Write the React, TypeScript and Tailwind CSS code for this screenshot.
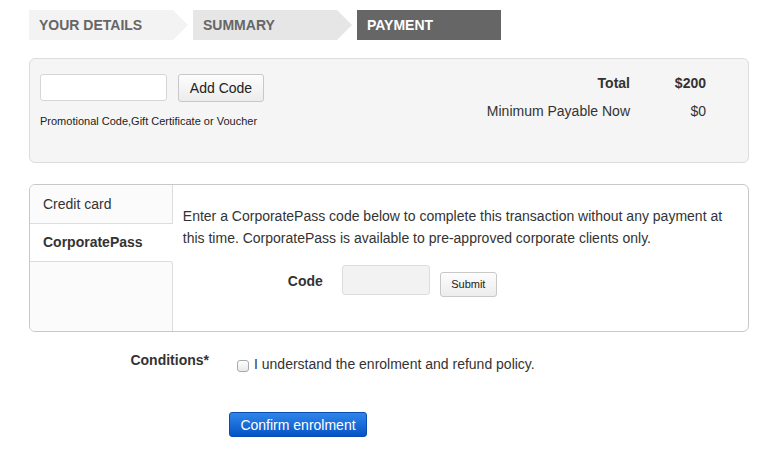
const font = { fontFamily: '"Liberation Sans", Arial, Helvetica, sans-serif' };

const steps = [
  { label: 'YOUR DETAILS', w: 'w-[159px]', cls: 'bg-[#f3f3f3] text-[#666]', arrow: true },
  { label: 'SUMMARY', w: 'w-[159px]', cls: 'bg-[#e6e6e6] text-[#666]', arrow: true },
  { label: 'PAYMENT', w: 'w-[144px]', cls: 'bg-[#666] text-white', arrow: false },
];

function Steps() {
  return (
    <div className="flex gap-[5px]">
      {steps.map((s) => (
        <div
          key={s.label}
          className={`${s.w} ${s.cls} h-[30px] flex items-center pl-[10px] text-[14px] font-bold ${
            s.arrow ? '[clip-path:polygon(0_0,calc(100%-15px)_0,100%_50%,calc(100%-15px)_100%,0_100%)]' : ''
          }`}
        >
          {s.label}
        </div>
      ))}
    </div>
  );
}

function PromoPanel() {
  return (
    <div className="mt-[18px] w-[720px] h-[105px] rounded-[6px] border border-[#dcdcdc] bg-[#f5f5f5] flex items-start justify-between pt-[15px] pl-[10px] pr-[42px]">
      <div>
        <div className="flex items-start gap-[11px]">
          <input className="w-[127px] h-[27px] bg-white border border-[#d6d6d6] rounded-[3px] outline-none" />
          <button className="w-[86px] h-[28px] rounded-[3px] border border-[#c8c8c8] bg-gradient-to-b from-[#fdfdfd] to-[#ececec] text-[14px] text-[#222]">
            Add Code
          </button>
        </div>
        <div className="mt-[11px] text-[11px] text-[#222]">Promotional Code,Gift Certificate or Voucher</div>
      </div>
      <div className="grid grid-cols-[auto_76px] gap-y-[12px] text-[14px] text-[#333] leading-[16px] pt-[1px]">
        <div className="text-right font-bold">Total</div>
        <div className="text-right font-bold">$200</div>
        <div className="text-right">Minimum Payable Now</div>
        <div className="text-right">$0</div>
      </div>
    </div>
  );
}

function PaymentPanel() {
  return (
    <div className="mt-[21px] w-[720px] h-[148px] rounded-[6px] border border-[#c8c8c8] bg-white flex overflow-hidden">
      <div className="w-[143px] flex flex-col text-[14px] text-[#333]">
        <div className="h-[39px] border-r border-b border-[#ddd] bg-[#fbfbfb] flex items-center pl-[13px]">Credit card</div>
        <div className="h-[37px] flex items-center pl-[13px] font-bold">CorporatePass</div>
        <div className="flex-1 border-t border-r border-[#ddd] rounded-tr-[3px] bg-[#fbfbfb]" />
      </div>
      <div className="w-[576px] pl-[10px] pr-[10px] pt-[20px] text-[14px] text-[#333] leading-[22px]">
        <p>
          Enter a CorporatePass code below to complete this transaction without any payment at this time. CorporatePass is
          available to pre-approved corporate clients only.
        </p>
        <div className="flex items-start mt-[16px]">
          <div className="w-[140px] text-right font-bold mt-[6px] leading-[20px]">Code</div>
          <input className="ml-[19px] w-[88px] h-[30px] bg-[#f2f2f2] border border-[#ddd] rounded-[3px] outline-none" />
          <button className="ml-[10px] mt-[7px] w-[57px] h-[25px] rounded-[3px] border border-[#c8c8c8] bg-gradient-to-b from-[#fdfdfd] to-[#ececec] text-[11px] text-[#222] leading-none">
            Submit
          </button>
        </div>
      </div>
    </div>
  );
}

export default function App() {
  return (
    <div className="w-[759px] h-[457px] bg-white pl-[29px] pt-[10px]" style={font}>
      <Steps />
      <PromoPanel />
      <PaymentPanel />
      <div className="flex items-start mt-[20px] text-[14px] text-[#333]">
        <div className="w-[180px] text-right font-bold leading-[16px]">Conditions*</div>
        <label className="ml-[28px] mt-[4px] flex items-center gap-[5px] leading-[16px]">
          <span className="w-[12px] h-[12px] rounded-[3px] border border-[#aaa] bg-gradient-to-b from-white to-[#e8e8e8] inline-block mt-[3px]" />
          I understand the enrolment and refund policy.
        </label>
      </div>
      <div className="pl-[200px] mt-[40px]">
        <button className="w-[138px] h-[25px] rounded-[3px] border border-[#0a4bb0] bg-gradient-to-b from-[#2f86ea] to-[#0553c6] text-white text-[14px] leading-none">
          Confirm enrolment
        </button>
      </div>
    </div>
  );
}
